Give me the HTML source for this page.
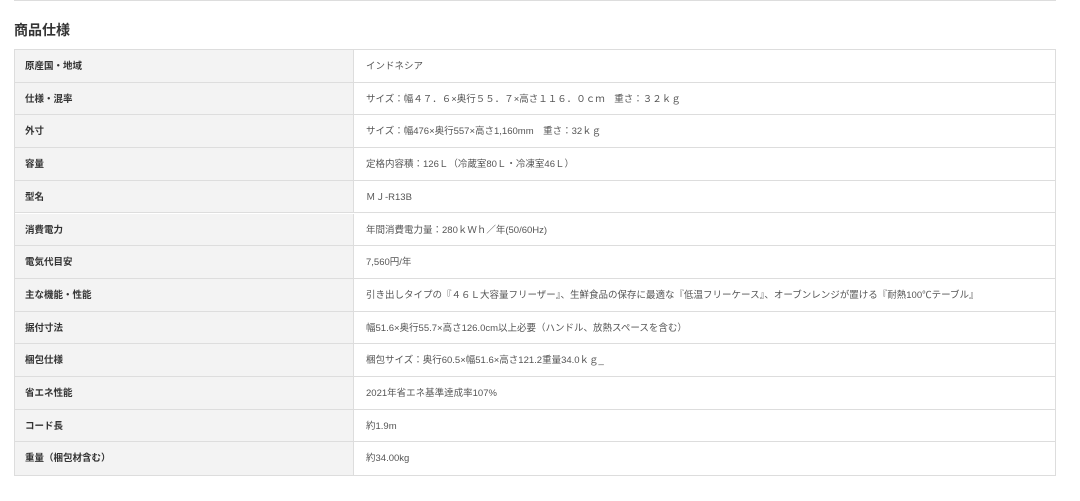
<!DOCTYPE html>
<html><head><meta charset="utf-8"><style>
body{margin:0;width:1080px;height:501px;background:#fff;font-family:"Liberation Sans","Noto Sans CJK JP",sans-serif;position:relative;overflow:hidden}
.top{position:absolute;left:14px;width:1042px;top:0;height:1px;background:#ddd}
h2{position:absolute;left:14px;top:20px;margin:0;font-size:14px;font-weight:bold;color:#333}
.t{position:absolute;left:14px;top:49px;width:1040px;height:425px;border:1px solid #ddd}
.r{position:absolute;left:0;width:1040px;height:32.7px;border-bottom:1px solid #ddd;box-sizing:border-box}
.r:last-child{border-bottom:none}
.l{position:absolute;left:0;top:0;width:339px;height:100%;background:#f3f3f3;border-right:1px solid #ddd;font-size:9.5px;font-weight:bold;color:#333;line-height:34px;padding-left:10px;box-sizing:border-box}
.v{position:absolute;left:351px;top:0;font-size:9.5px;color:#555;line-height:34px}
</style></head><body>
<div class="top"></div>
<h2>商品仕様</h2>
<div class="t">
<div class="r" style="top:0"><div class="l">原産国・地域</div><div class="v">インドネシア</div></div>
<div class="r" style="top:32.7px"><div class="l">仕様・混率</div><div class="v">サイズ：幅４７．６×奥行５５．７×高さ１１６．０ｃｍ　重さ：３２ｋｇ</div></div>
<div class="r" style="top:65.4px"><div class="l">外寸</div><div class="v">サイズ：幅476×奥行557×高さ1,160mm　重さ：32ｋｇ</div></div>
<div class="r" style="top:98.1px"><div class="l">容量</div><div class="v">定格内容積：126Ｌ（冷蔵室80Ｌ・冷凍室46Ｌ）</div></div>
<div class="r" style="top:130.8px"><div class="l">型名</div><div class="v">ＭＪ-R13B</div></div>
<div class="r" style="top:163.5px"><div class="l">消費電力</div><div class="v">年間消費電力量：280ｋＷｈ／年(50/60Hz)</div></div>
<div class="r" style="top:196.2px"><div class="l">電気代目安</div><div class="v">7,560円/年</div></div>
<div class="r" style="top:228.9px"><div class="l">主な機能・性能</div><div class="v">引き出しタイプの『４６Ｌ大容量フリーザー』、生鮮食品の保存に最適な『低温フリーケース』、オーブンレンジが置ける『耐熱100℃テーブル』</div></div>
<div class="r" style="top:261.6px"><div class="l">据付寸法</div><div class="v">幅51.6×奥行55.7×高さ126.0cm以上必要（ハンドル、放熱スペースを含む）</div></div>
<div class="r" style="top:294.3px"><div class="l">梱包仕様</div><div class="v">梱包サイズ：奥行60.5×幅51.6×高さ121.2重量34.0ｋｇ_</div></div>
<div class="r" style="top:327px"><div class="l">省エネ性能</div><div class="v">2021年省エネ基準達成率107%</div></div>
<div class="r" style="top:359.7px"><div class="l">コード長</div><div class="v">約1.9m</div></div>
<div class="r" style="top:392.4px"><div class="l">重量（梱包材含む）</div><div class="v">約34.00kg</div></div>
</div>
</body></html>
